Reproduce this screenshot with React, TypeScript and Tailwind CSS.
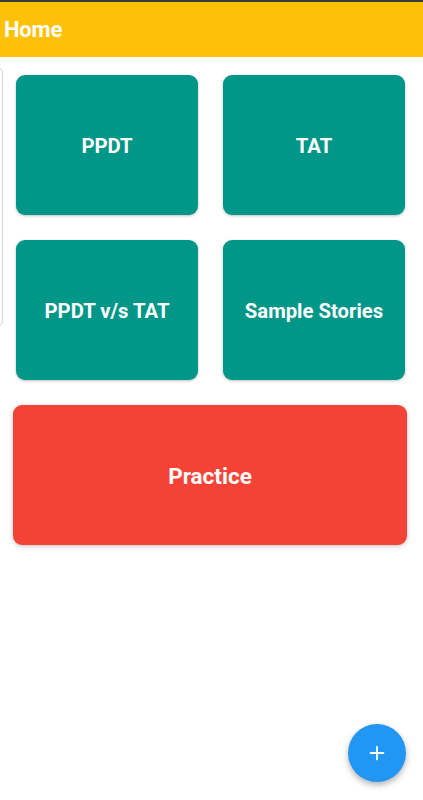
import { Plus } from "lucide-react";

type Tile = { label: string };

const tiles: Tile[] = [
    { label: "PPDT" },
    { label: "TAT" },
    { label: "PPDT v/s TAT" },
    { label: "Sample Stories" },
];

export default function App() {
    return (
        <div
            className="relative w-[423px] h-[800px] bg-white overflow-hidden"
            style={{ fontFamily: "Roboto, 'Liberation Sans', sans-serif" }}
        >
            {/* Barra superior */}
            <div className="h-[57px] bg-[#fdc107] border-t-2 border-[#3b3b3b] flex items-center px-[4px]">
                <h1 className="text-white text-[22px] font-bold tracking-[-0.2px]">Home</h1>
            </div>

            {/* Panel lateral asomado */}
            <div className="absolute left-[-20px] top-[67px] w-[23px] h-[260px] border border-gray-300 rounded-md bg-white" />

            {/* Cuadrícula de opciones */}
            <div className="grid grid-cols-2 gap-x-[25px] gap-y-[25px] pl-[16px] pr-[18px] pt-[18px]">
                {tiles.map((t) => (
                    <div
                        key={t.label}
                        className="h-[140px] rounded-[9px] bg-[#009688] shadow-[0_1px_3px_rgba(0,0,0,0.25)] flex items-center justify-center pt-[3px]"
                    >
                        <span className="text-white text-[20.3px] font-bold">{t.label}</span>
                    </div>
                ))}
            </div>

            <div className="pl-[13px] pr-[16px] pt-[25px]">
                <div className="h-[140px] rounded-[9px] bg-[#f44336] shadow-[0_1px_4px_rgba(0,0,0,0.25)] flex items-center justify-center pt-[3px]">
                    <span className="text-white text-[22.5px] font-bold">Practice</span>
                </div>
            </div>

            {/* Botón flotante */}
            <button className="absolute left-[348px] top-[724px] w-[58px] h-[58px] rounded-full bg-[#2196f3] shadow-[0_3px_6px_rgba(0,0,0,0.3)] flex items-center justify-center">
                <Plus className="text-white w-[22px] h-[22px]" strokeWidth={2} />
            </button>
        </div>
    );
}
